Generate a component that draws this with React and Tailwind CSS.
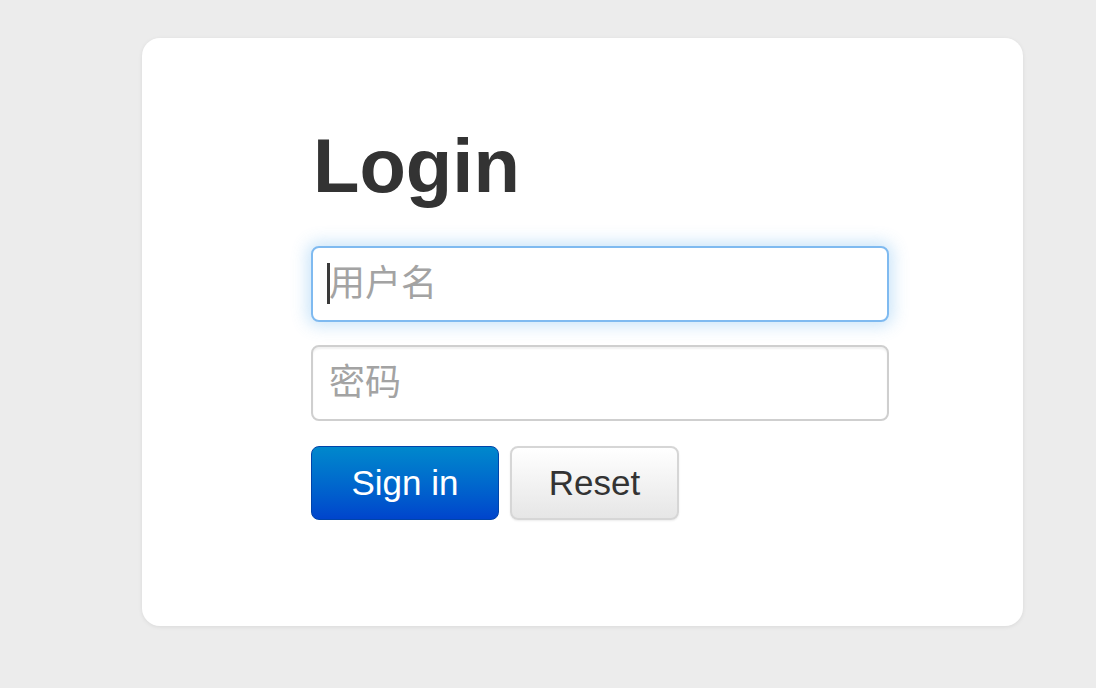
const FONT = { fontFamily: '"Liberation Sans", Arial, "Noto Sans CJK SC", sans-serif' };

function Field({ placeholder, focused, type = "text" }) {
  return (
    <div className="relative w-[578px] h-[76px]">
      <input
        type={type}
        placeholder={placeholder}
        className={`w-full h-full rounded-[8px] border-2 bg-white pl-[16px] pr-4 text-[36px] text-[#555] placeholder:text-[#a3a3a3] outline-none ${
          focused
            ? "border-[#7fbaf0] shadow-[0_0_16px_4px_rgba(82,168,236,0.3)]"
            : "border-[#cfcfcf] shadow-[inset_0_2px_2px_rgba(0,0,0,0.06)]"
        }`}
        style={FONT}
      />
      {focused && <span className="absolute left-[16px] top-[17px] w-[3px] h-[41px] bg-[#3a3a3a]" />}
    </div>
  );
}

export default function App() {
  return (
    <div className="w-[1096px] h-[688px] bg-[#ececec] pt-[38px] pl-[142px]" style={FONT}>
      <div className="w-[881px] h-[588px] rounded-[18px] bg-white shadow-[0_1px_4px_rgba(0,0,0,0.08)] pt-[88px] pl-[169px]">
        {/* Titre */}
        <h1 className="ml-[2px] text-[76px] leading-[80px] font-bold text-[#333]">Login</h1>

        <div className="mt-[40px] flex flex-col gap-[23px]">
          <Field placeholder="用户名" focused />
          <Field placeholder="密码" type="password" />
        </div>

        {/* Boutons */}
        <div className="mt-[25px] flex gap-[11px]">
          <button className="w-[188px] h-[74px] rounded-[8px] border border-[#0044aa] bg-gradient-to-b from-[#0088cc] to-[#0044cc] text-white text-[35px]">
            Sign in
          </button>
          <button className="w-[169px] h-[74px] rounded-[8px] border-2 border-[#d6d6d6] bg-gradient-to-b from-white to-[#e6e6e6] text-[#333] text-[35px] shadow-[0_1px_2px_rgba(0,0,0,0.08)]">
            Reset
          </button>
        </div>
      </div>
    </div>
  );
}
